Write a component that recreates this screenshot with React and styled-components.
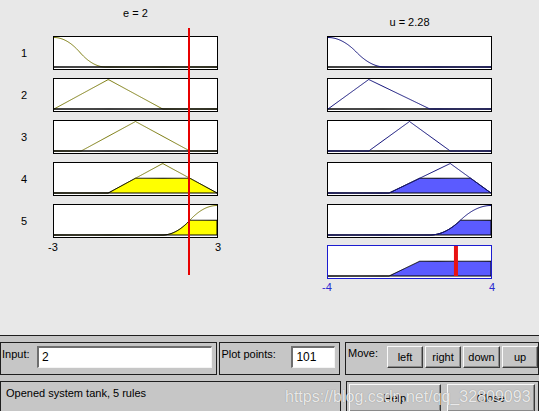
import React from 'react'
import styled, { createGlobalStyle } from 'styled-components'

const GlobalStyle = createGlobalStyle`
  body {
    margin: 0;
    background: #e8e8e8;
    font-family: "Liberation Sans", Arial, sans-serif;
    overflow: hidden;
  }
`

// plot geometry (inside the 1px border)
const W = 163
const H = 32
const BASE = 30
const N = 160

const toY = (v) => 0.5 + (1 - v) * (BASE - 0.5)

const tri = (a, b, c) => (x) => {
    if (x <= a || x >= c) return 0
    return x < b ? (x - a) / (b - a) : (c - x) / (c - b)
}
const zmf = (a, b) => (x) => {
    if (x <= a) return 1
    if (x >= b) return 0
    const m = (a + b) / 2
    const t = (x - a) / (b - a)
    return x <= m ? 1 - 2 * t * t : 2 * ((x - b) / (b - a)) ** 2
}
const smf = (a, b) => (x) => 1 - zmf(a, b)(x)

const inputMfs = [zmf(-3, -1.1), tri(-3, -1, 1), tri(-2, 0, 2), tri(-1, 1, 3), smf(1, 3)]
const outputMfs = [zmf(-4, -1.2), tri(-4, -2, 1), tri(-2, 0, 2), tri(-1, 2, 4), smf(1, 4)]

const E = 2
const U = 2.28
const firing = inputMfs.map((mf) => Math.round(mf(E) * 100) / 100)

const sample = (fn, lo, hi) => {
    const pts = []
    for (let i = 0; i <= N; i++) {
        const t = i / N
        pts.push([t * W, fn(lo + t * (hi - lo))])
    }
    return pts
}
const linePath = (pts) =>
    pts.map(([x, v], i) => `${i ? 'L' : 'M'}${x.toFixed(2)},${toY(v).toFixed(2)}`).join(' ')
const areaPath = (pts) => `M0,${BASE} ` + pts.map(([x, v]) => `L${x.toFixed(2)},${toY(v).toFixed(2)}`).join(' ') + ` L${W},${BASE} Z`

const Window = styled.div`
    width: 539px;
    height: 411px;
    position: relative;
    overflow: hidden;
    display: flex;
    flex-direction: column;
`
const PlotArea = styled.div`
    height: 335px;
    flex-shrink: 0;
    display: flex;
    background: #e8e8e8;
`
const InputColumn = styled.div`
    position: relative;
    width: 218px;
`
const OutputColumn = styled.div`
    width: 165px;
    margin-left: 109px;
`
const Title = styled.div`
    box-sizing: border-box;
    height: 36px;
    padding-top: ${(p) => p.$top}px;
    padding-left: ${(p) => p.$indent || 0}px;
    font-size: 11px;
    line-height: 14px;
    text-align: center;
    color: #000;
`
const Rows = styled.div`
    display: flex;
    flex-direction: column;
    gap: 8px;
`
const Row = styled.div`
    display: flex;
    align-items: center;
    height: 34px;
    margin-top: ${(p) => p.$mt || 0}px;
`
const RowLabel = styled.div`
    width: 53px;
    box-sizing: border-box;
    padding-left: 21px;
    font-size: 11px;
    color: #000;
`
const PlotBox = styled.div`
    width: 165px;
    height: 34px;
    box-sizing: border-box;
    border: 1px solid ${(p) => p.$border || '#000'};
    background: #fff;
    svg {
        display: block;
    }
`
const AxisRow = styled.div`
    display: flex;
    justify-content: space-between;
    margin-left: ${(p) => p.$indent || 0}px;
    padding-top: ${(p) => p.$top}px;
    font-size: 11px;
    line-height: 14px;
    color: ${(p) => p.$color};
`
const Tick = styled.span`
    transform: translateX(${(p) => (p.$end ? '50%' : '-50%')});
`
const Cursor = styled.div`
    position: absolute;
    left: 188px;
    top: 28px;
    width: 2px;
    height: 247px;
    background: #e80000;
`

const ControlPanel = styled.div`
    flex: 1;
    background: #c6c6c6;
    border-top: 1px solid #1e1e1e;
    padding-top: 6px;
    display: flex;
    flex-direction: column;
    gap: 6px;
`
const ControlRow = styled.div`
    display: flex;
    height: ${(p) => p.$h}px;
    flex-shrink: 0;
`
const Frame = styled.div`
    box-sizing: border-box;
    width: ${(p) => p.$w}px;
    margin-left: ${(p) => p.$gap || 0}px;
    border: 1px solid #1e1e1e;
    padding-left: ${(p) => p.$pad || 1}px;
    display: flex;
    align-items: flex-start;
`
const Label = styled.div`
    width: ${(p) => p.$w}px;
    margin-top: ${(p) => p.$top || 4}px;
    font-size: 11px;
    line-height: 14px;
    color: #000;
    white-space: nowrap;
`
const Field = styled.div`
    box-sizing: border-box;
    width: ${(p) => p.$w}px;
    height: 22px;
    margin-top: 3px;
    background: #fff;
    border-top: 2px solid #6e6e6e;
    border-left: 2px solid #6e6e6e;
    border-right: 1px solid #f4f4f4;
    border-bottom: 1px solid #f4f4f4;
    padding-left: 3px;
    font-size: 12px;
    line-height: 19px;
    color: #000;
`
const Buttons = styled.div`
    display: flex;
    gap: ${(p) => p.$gap}px;
    margin-top: ${(p) => p.$top}px;
`
const Button = styled.button`
    box-sizing: border-box;
    width: ${(p) => p.$w}px;
    height: ${(p) => p.$h || 22}px;
    padding: 0;
    background: #c6c6c6;
    border: 1px solid;
    border-color: #fafafa #3a3a3a #3a3a3a #fafafa;
    box-shadow: inset -1px -1px 0 #8a8a8a;
    font-family: "Liberation Sans", Arial, sans-serif;
    font-size: 11px;
    color: #000;
`
const Status = styled.div`
    margin-top: 4px;
    padding-left: 4px;
    font-size: 11px;
    line-height: 14px;
    color: #000;
`
const Watermark = styled.div`
    position: absolute;
    left: 285px;
    top: 388px;
    font-size: 16px;
    line-height: 18px;
    color: rgba(255, 255, 255, 0.82);
    text-shadow: 0 0 1px rgba(0, 0, 0, 0.35);
    white-space: nowrap;
    pointer-events: none;
`

const InputPlot = ({ mf, level }) => {
    const curve = sample(mf, -3, 3)
    const clipped = sample((x) => Math.min(mf(x), level), -3, 3)
    return (
        <PlotBox>
            <svg width={W} height={H}>
                <path d={linePath(curve)} fill="none" stroke="#7d7d10" strokeWidth="1" />
                <path d={areaPath(clipped)} fill="#ffff00" stroke="#000" strokeWidth="1" />
            </svg>
        </PlotBox>
    )
}

const OutputPlot = ({ mf, level }) => {
    const curve = sample(mf, -4, 4)
    const clipped = sample((x) => Math.min(mf(x), level), -4, 4)
    return (
        <PlotBox>
            <svg width={W} height={H}>
                <path d={areaPath(clipped)} fill="#5b5bff" stroke="#000" strokeWidth="1" />
                <path d={linePath(curve)} fill="none" stroke="#10107a" strokeWidth="1" />
            </svg>
        </PlotBox>
    )
}

const AggregatePlot = () => {
    const agg = sample((x) => Math.max(...outputMfs.map((mf, i) => Math.min(mf(x), firing[i]))), -4, 4)
    const bar = ((U + 4) / 8) * W
    return (
        <PlotBox $border="#1c1cd0">
            <svg width={W} height={H}>
                <path d={areaPath(agg)} fill="#5b5bff" stroke="#000" strokeWidth="1" />
                <rect x={bar - 2} y={0} width={4} height={BASE} fill="#e81212" />
            </svg>
        </PlotBox>
    )
}

const App = () => {
    return (
        <Window>
            <GlobalStyle />
            <PlotArea>
                <InputColumn>
                    <Title $top={6} $indent={53}>e = {E}</Title>
                    <Rows>
                        {inputMfs.map((mf, i) => (
                            <Row key={`in-` + i}>
                                <RowLabel>{i + 1}</RowLabel>
                                <InputPlot mf={mf} level={firing[i]} />
                            </Row>
                        ))}
                    </Rows>
                    <AxisRow $indent={53} $top={2} $color="#000">
                        <Tick>-3</Tick>
                        <Tick $end>3</Tick>
                    </AxisRow>
                    <Cursor />
                </InputColumn>
                <OutputColumn>
                    <Title $top={15}>u = {U}</Title>
                    <Rows>
                        {outputMfs.map((mf, i) => (
                            <Row key={`out-` + i}>
                                <OutputPlot mf={mf} level={firing[i]} />
                            </Row>
                        ))}
                    </Rows>
                    <Row $mt={7}>
                        <AggregatePlot />
                    </Row>
                    <AxisRow $top={1} $color="#2a2ad0">
                        <Tick>-4</Tick>
                        <Tick $end>4</Tick>
                    </AxisRow>
                </OutputColumn>
            </PlotArea>
            <ControlPanel>
                <ControlRow $h={33}>
                    <Frame $w={220}>
                        <Label $w={35}>Input:</Label>
                        <Field $w={175}>2</Field>
                    </Frame>
                    <Frame $w={122} $gap={2}>
                        <Label $w={70}>Plot points:</Label>
                        <Field $w={44}>101</Field>
                    </Frame>
                    <Frame $w={195} $gap={5} $pad={2}>
                        <Label $w={39} $top={3}>Move:</Label>
                        <Buttons $gap={2} $top={3}>
                            <Button $w={36}>left</Button>
                            <Button $w={36}>right</Button>
                            <Button $w={37}>down</Button>
                            <Button $w={36}>up</Button>
                        </Buttons>
                    </Frame>
                </ControlRow>
                <ControlRow $h={40}>
                    <Frame $w={344}>
                        <Status>Opened system tank, 5 rules</Status>
                    </Frame>
                    <Frame $w={195} $gap={5} $pad={2}>
                        <Buttons $gap={6} $top={2}>
                            <Button $w={92} $h={28}>Help</Button>
                            <Button $w={88} $h={28}>Close</Button>
                        </Buttons>
                    </Frame>
                </ControlRow>
            </ControlPanel>
            <Watermark>https://blog.csdn.net/qq_32809093</Watermark>
        </Window>
    )
}

export default App
